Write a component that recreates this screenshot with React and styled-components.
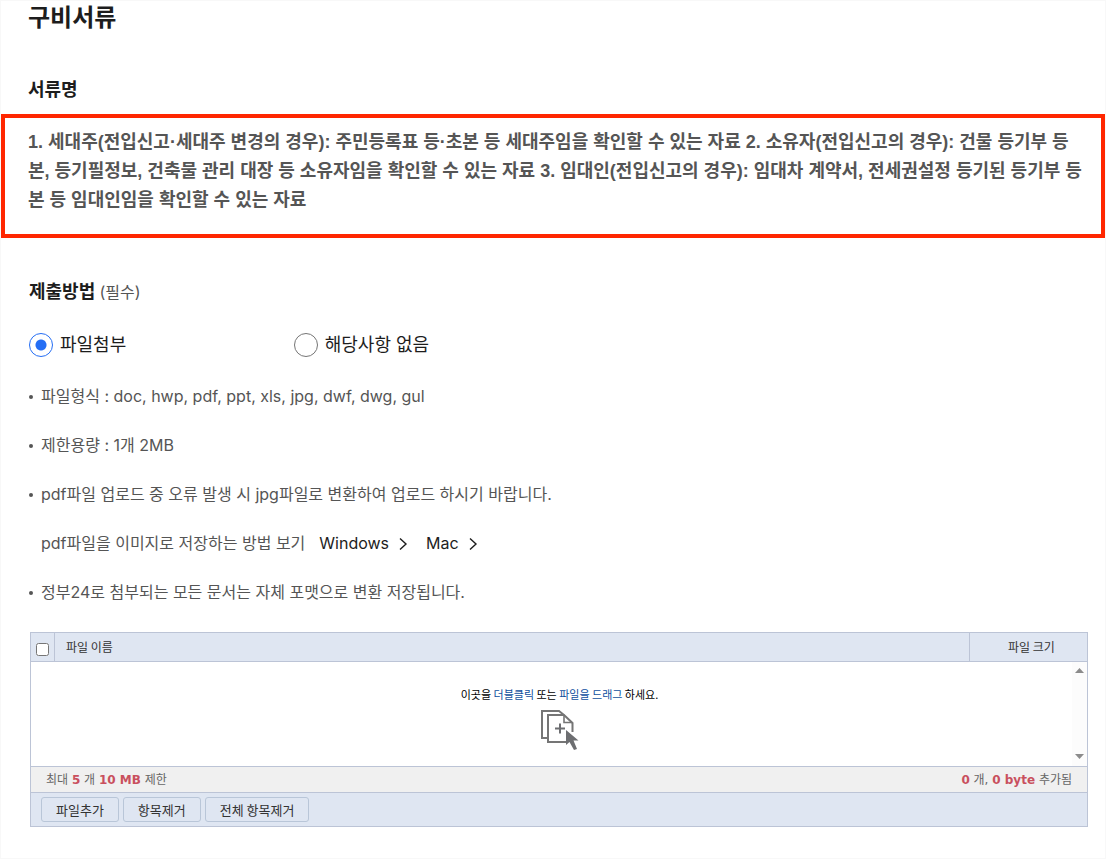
import React, { useState } from 'react'
import styled, { createGlobalStyle } from 'styled-components'

const guides = [
  { label: 'Windows', href: '#windows' },
  { label: 'Mac', href: '#mac' },
]

const methods = [
  { value: 'file', label: '파일첨부' },
  { value: 'none', label: '해당사항 없음' },
]

const ChevronIcon = () => (
  <svg width="14" height="14" viewBox="0 0 14 14" fill="none" aria-hidden="true">
    <path d="M2 1.5L8 7L2 12.5" stroke="currentColor" strokeWidth="1.4" />
  </svg>
)

const DropIcon = () => (
  <svg width="38" height="41" viewBox="0 0 38 41" fill="none" aria-hidden="true">
    <path d="M7 28H1V1H18L23 5" stroke="#757575" strokeWidth="2" />
    <path d="M26 32H7V5H23L31.5 13V22" stroke="#757575" strokeWidth="2" />
    <path d="M23 5V12.5H31" stroke="#757575" strokeWidth="1.6" />
    <path d="M14 18.5H24M19 13.5V23.5" stroke="#6d6e71" strokeWidth="2" />
    <path d="M25 20V35L28.5 32L33 40L36 39L32.5 30.5H37.5Z" fill="#6d6e71" />
  </svg>
)

const ArrowIcon = ({ down }) => (
  <svg width="9" height="5" viewBox="0 0 9 5" aria-hidden="true">
    <path d={down ? 'M0 0H9L4.5 5Z' : 'M0 5H9L4.5 0Z'} fill="#8b8b8b" />
  </svg>
)

const App = () => {
  const [method, setMethod] = useState('file')
  return (
    <>
      <GlobalStyle />
      <Page>
        <Title>구비서류</Title>
        <Heading>서류명</Heading>
        <Notice>
          1. 세대주(전입신고·세대주 변경의 경우): 주민등록표 등·초본 등 세대주임을 확인할 수 있는 자료 2. 소유자(전입신고의 경우): 건물 등기부 등본, 등기필정보, 건축물 관리 대장 등 소유자임을 확인할 수 있는 자료 3. 임대인(전입신고의 경우): 임대차 계약서, 전세권설정 등기된 등기부 등본 등 임대인임을 확인할 수 있는 자료
        </Notice>
        <Section>
          <Methods>
            <Legend>
              제출방법 <Required>(필수)</Required>
            </Legend>
            <Options>
              {methods.map(({ value, label }) => (
                <Option key={value}>
                  <Radio
                    name="method"
                    value={value}
                    checked={method === value}
                    onChange={() => setMethod(value)}
                  />
                  {label}
                </Option>
              ))}
            </Options>
          </Methods>
          <Notes>
            <Note>파일형식 : doc, hwp, pdf, ppt, xls, jpg, dwf, dwg, gul</Note>
            <Note>제한용량 : 1개 2MB</Note>
            <Note>pdf파일 업로드 중 오류 발생 시 jpg파일로 변환하여 업로드 하시기 바랍니다.</Note>
            <Note plain>
              pdf파일을 이미지로 저장하는 방법 보기
              {guides.map(({ label, href }) => (
                <GuideLink key={label} href={href}>
                  {label}
                  <ChevronIcon />
                </GuideLink>
              ))}
            </Note>
            <Note>정부24로 첨부되는 모든 문서는 자체 포맷으로 변환 저장됩니다.</Note>
          </Notes>
          <Uploader>
            <FileTable>
              <thead>
                <tr>
                  <CheckCell>
                    <Checkbox aria-label="전체 선택" />
                  </CheckCell>
                  <NameCell>파일 이름</NameCell>
                  <SizeCell>파일 크기</SizeCell>
                </tr>
              </thead>
              <tbody>
                <tr>
                  <DropCell colSpan={3}>
                    <DropArea>
                      <DropZone>
                        <p>
                          이곳을 <Blue>더블클릭</Blue> 또는 <Blue>파일을 드래그</Blue> 하세요.
                        </p>
                        <DropIcon />
                      </DropZone>
                      <ScrollTrack>
                        <ArrowIcon />
                        <ArrowIcon down />
                      </ScrollTrack>
                    </DropArea>
                  </DropCell>
                </tr>
              </tbody>
            </FileTable>
            <Status>
              <span>
                최대 <Count>5</Count> 개 <Count>10 MB</Count> 제한
              </span>
              <span>
                <Count>0</Count> 개, <Count>0 byte</Count> 추가됨
              </span>
            </Status>
            <Toolbar>
              <ToolButton>파일추가</ToolButton>
              <ToolButton>항목제거</ToolButton>
              <ToolButton>전체 항목제거</ToolButton>
            </Toolbar>
          </Uploader>
        </Section>
      </Page>
    </>
  )
}

export default App

const GlobalStyle = createGlobalStyle`
  * {
    box-sizing: border-box;
  }
  body {
    margin: 0;
    background: #fff;
    color: #1d1d1d;
    font-family: Inter, 'Noto Sans CJK KR', sans-serif;
  }
  h1, h2, p, ul, fieldset {
    margin: 0;
    padding: 0;
  }
`

const Page = styled.main`
  border: 1px solid #f8f8f8;
  padding-bottom: 31px;
`

const Title = styled.h1`
  padding: 1px 27px 0;
  font-size: 24px;
  line-height: 32px;
  font-weight: 700;
`

const Heading = styled.h2`
  padding: 42px 27px 10px;
  font-size: 18px;
  line-height: 28px;
  font-weight: 700;
`

const Notice = styled.p`
  border: 4px solid #ff2600;
  padding: 10px 16px 19px 23px;
  color: #555;
  font-family: 'Liberation Sans', 'Noto Sans CJK KR', sans-serif;
  font-size: 18px;
  line-height: 29px;
  font-weight: 700;
`

const Section = styled.section`
  padding: 40px 17px 0 28px;
`

const Methods = styled.fieldset`
  border: 0;
  min-width: 0;
`

const Legend = styled.legend`
  padding: 0;
  font-size: 18px;
  line-height: 28px;
  font-weight: 700;
`

const Required = styled.span`
  color: #555;
  font-size: 16px;
  font-weight: 400;
`

const Options = styled.div`
  display: grid;
  grid-template-columns: repeat(4, 1fr);
  padding-top: 25px;
`

const Option = styled.label`
  display: flex;
  align-items: center;
  gap: 7px;
  font-size: 18px;
  line-height: 28px;
`

const Radio = styled.input.attrs({ type: 'radio' })`
  appearance: none;
  flex: none;
  width: 24px;
  height: 24px;
  margin: 0;
  border: 1px solid #757575;
  border-radius: 50%;
  &:checked {
    border-color: #256ef4;
    background: radial-gradient(circle, #256ef4 5px, #fff 6px);
  }
`

const Notes = styled.ul`
  display: flex;
  flex-direction: column;
  gap: 24px;
  padding-top: 25px;
  list-style: none;
`

const Note = styled.li.withConfig({ shouldForwardProp: prop => prop !== 'plain' })`
  display: flex;
  align-items: center;
  color: #555;
  font-size: 16px;
  line-height: 25px;
  &::before {
    content: '';
    width: 4px;
    height: 4px;
    margin-right: 8px;
    border-radius: 50%;
    background: ${props => props.plain ? 'transparent' : '#555'};
  }
`

const GuideLink = styled.a`
  display: flex;
  align-items: center;
  gap: 9px;
  margin-left: 14px;
  color: #1d1d1d;
  text-decoration: none;
`

const Uploader = styled.div`
  margin: 27px 0 0 1px;
  border: 1px solid #bcc4d6;
  background: #dfe6f2;
  color: #333;
  font-family: 'Noto Sans CJK KR', sans-serif;
  font-size: 12px;
`

const FileTable = styled.table`
  width: 100%;
  border-collapse: separate;
  border-spacing: 0;
  table-layout: fixed;
`

const HeadCell = styled.th`
  height: 29px;
  padding: 0;
  border-bottom: 1px solid #bcc4d6;
  font-weight: 400;
  line-height: 18px;
`

const CheckCell = styled(HeadCell)`
  width: 24px;
  border-right: 1px solid #bcc4d6;
`

const NameCell = styled(HeadCell)`
  padding-left: 11px;
  text-align: left;
`

const SizeCell = styled(HeadCell)`
  width: 118px;
  padding-left: 6px;
  border-left: 1px solid #bcc4d6;
`

const Checkbox = styled.input.attrs({ type: 'checkbox' })`
  display: block;
  width: 13px;
  height: 13px;
  margin: 5px auto 0;
`

const DropCell = styled.td`
  padding: 0;
  background: #fff;
`

const DropArea = styled.div`
  display: flex;
  height: 104px;
`

const DropZone = styled.div`
  display: flex;
  flex: 1;
  flex-direction: column;
  align-items: center;
  gap: 7px;
  padding: 23px 0 0 16px;
  color: #000;
  font-size: 11px;
  line-height: 18px;
`

const Blue = styled.span`
  color: #0f4f9e;
`

const ScrollTrack = styled.div`
  display: flex;
  flex-direction: column;
  align-items: center;
  justify-content: space-between;
  width: 15px;
  padding: 6px 0 7px;
  background: #fcfcfc;
`

const Status = styled.div`
  display: flex;
  justify-content: space-between;
  padding: 4px 15px 3px;
  border-top: 1px solid #bcc4d6;
  border-bottom: 1px solid #bcc4d6;
  background: #f0f0f0;
  color: #666;
  font-family: 'DejaVu Sans', 'Noto Sans CJK KR', sans-serif;
  line-height: 18px;
`

const Count = styled.strong`
  color: #c9505e;
`

const Toolbar = styled.div`
  display: flex;
  gap: 4px;
  padding: 4px 10px;
`

const ToolButton = styled.button.attrs({ type: 'button' })`
  height: 25px;
  padding: 0 14px;
  border: 1px solid #b9c6d8;
  border-radius: 3px;
  background: #dfe6f2;
  color: #333;
  font-family: inherit;
  font-size: 13px;
  line-height: 20px;
`
